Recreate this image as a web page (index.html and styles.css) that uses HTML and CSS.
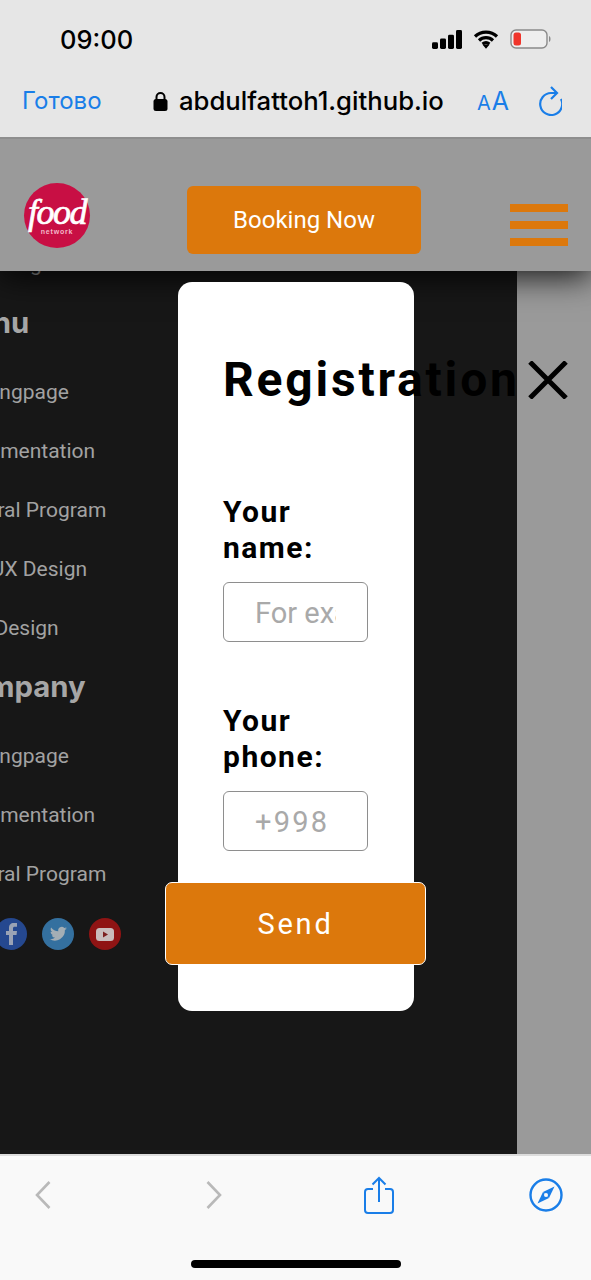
FILE: index.html
```html
<!DOCTYPE html>
<html lang="ru">
<head>
<meta charset="utf-8">
<title>Registration</title>
<link rel="stylesheet" href="styles.css">
</head>
<body>
<div class="phone">
  <div class="chrome">
    <div class="status">
      <span class="time">09:00</span>
      <div class="status-icons">
        <svg width="30" height="19" viewBox="0 0 30 20" preserveAspectRatio="none"><rect x="0" y="13" width="6" height="7" rx="1.5"/><rect x="8" y="9" width="6" height="11" rx="1.5"/><rect x="16" y="5" width="6" height="15" rx="1.5"/><rect x="24" y="0" width="6" height="20" rx="1.5"/></svg>
        <svg width="26" height="20" viewBox="0 0 26 20"><path d="M13 15.500l3.600 0-3.600 4.300-3.600-4.300z" /><path d="M2 7.500C8 1.600 18 1.600 24 7.500M6 11.500c4-3.800 10-3.800 14 0M9.600 15c2-1.700 4.800-1.700 6.800 0" fill="none" stroke="#000" stroke-width="3.200"/></svg>
        <svg class="battery" width="42" height="20" viewBox="0 0 42 20"><rect x="1" y="1" width="36" height="18" rx="5" fill="#eee" stroke="#8a8a8a" stroke-width="1.400"/><rect x="3.500" y="3.500" width="7.500" height="13" rx="2.500" fill="#f0352b"/><path d="M39 7c2 .6 2 5.400 0 6z" fill="#8a8a8a"/></svg>
      </div>
    </div>
    <div class="address">
      <span class="done">Готово</span>
      <div class="url">
        <svg width="15" height="20" viewBox="0 0 15 20"><path d="M3.500 9V6a4 4 0 0 1 8 0v3" fill="none" stroke="#000" stroke-width="2"/><rect x="0.500" y="8" width="14" height="12" rx="2.500"/></svg>
        <span>abdulfattoh1.github.io</span>
      </div>
      <span class="aa"><small>A</small>A</span>
      <svg class="reload" width="24" height="30" viewBox="0 0 24 30"><path d="M19 7H13A11 11 0 1 0 23 13" fill="none" stroke="#1a7ee8" stroke-width="2.200"/><path d="M13 1l6 6-6 6" fill="none" stroke="#1a7ee8" stroke-width="2.200"/></svg>
    </div>
  </div>

  <div class="viewport">
    <header class="site-header">
      <div class="logo"><span class="logo-food">food</span><span class="logo-net">network</span></div>
      <a class="booking">Booking Now</a>
      <div class="burger"><i></i><i></i><i></i></div>
    </header>
    <div class="site-body">
      <aside class="sidebar">
        <a class="link peek">Marketing</a>
        <h3 class="head">Menu</h3>
        <a class="link">Landingpage</a>
        <a class="link">Implementation</a>
        <a class="link">Referral Program</a>
        <a class="link">UI &amp; UX Design</a>
        <a class="link">Web Design</a>
        <h3 class="head">Company</h3>
        <a class="link">Landingpage</a>
        <a class="link">Implementation</a>
        <a class="link">Referral Program</a>
        <div class="social">
          <svg width="32" height="32" viewBox="0 0 32 32"><circle cx="16" cy="16" r="16" fill="#25488f"/><path d="M18 27V17h3.500l.5-4h-4v-2.500c0-1.200.5-1.800 1.800-1.800H22V5h-3c-3.500 0-5 2-5 5v3h-3v4h3v10z" fill="#9aa3b5"/></svg>
          <svg width="32" height="32" viewBox="0 0 32 32"><circle cx="16" cy="16" r="16" fill="#34709f"/><path d="M25 10.500c-.7.300-1.400.5-2 .6.700-.4 1.300-1.100 1.500-1.900-.7.400-1.400.7-2.200.8a3.500 3.500 0 0 0-6 3.200c-2.900-.1-5.500-1.500-7.200-3.700-.9 1.600-.4 3.600 1.100 4.600-.6 0-1.100-.2-1.600-.4 0 1.700 1.200 3.100 2.800 3.500-.5.100-1 .1-1.600 0 .4 1.400 1.700 2.400 3.300 2.400A7 7 0 0 1 7.500 21a10 10 0 0 0 15.400-8.900c.8-.4 1.500-1 2.100-1.600z" fill="#a3aeb5"/></svg>
          <svg width="32" height="32" viewBox="0 0 32 32"><circle cx="16" cy="16" r="16" fill="#8f1414"/><rect x="7" y="10" width="18" height="13" rx="3.500" fill="#c9bdbd"/><path d="M14 13.500l5 3-5 3z" fill="#7c1f1f"/></svg>
        </div>
      </aside>
    </div>

    <form class="modal">
      <div class="modal-top">
        <h2 class="modal-title">Registration</h2>
        <svg class="close" width="40" height="38" viewBox="0 0 40 38"><path d="M2 1l36 36M38 1L2 37" fill="none" stroke="#000" stroke-width="5"/></svg>
      </div>
      <label class="field-label first">Your name:</label>
      <input class="field" type="text" placeholder="For example">
      <label class="field-label second">Your phone:</label>
      <input class="field field-phone" type="text" placeholder="+998">
      <button class="send" type="button">Send</button>
    </form>
  </div>

  <div class="toolbar">
    <div class="tools">
      <svg width="18" height="30" viewBox="0 0 18 30"><path d="M15.500 2L3 15l12.500 13" fill="none" stroke="#b9b9b9" stroke-width="2.600"/></svg>
      <svg class="forward" width="18" height="30" viewBox="0 0 18 30"><path d="M2.500 2L15 15 2.500 28" fill="none" stroke="#b9b9b9" stroke-width="2.600"/></svg>
      <svg width="30" height="38" viewBox="0 0 30 38"><path d="M9 13H4a3 3 0 0 0-3 3v18a3 3 0 0 0 3 3h22a3 3 0 0 0 3-3V16a3 3 0 0 0-3-3h-5" fill="none" stroke="#1a7ee8" stroke-width="2"/><path d="M15 26V2M8.500 8.500L15 2l6.500 6.500" fill="none" stroke="#1a7ee8" stroke-width="2"/></svg>
      <svg width="34" height="34" viewBox="0 0 34 34"><circle cx="17" cy="17" r="15.500" fill="none" stroke="#1a7ee8" stroke-width="2.400"/><path d="M25.500 8.500L14 14l6 6z" fill="#1a7ee8"/><path d="M8.500 25.500L14 14l6 6z" fill="#1a7ee8"/><circle cx="17" cy="17" r="2" fill="#f9f9f9"/></svg>
    </div>
    <div class="home-bar"></div>
  </div>
</div>
</body>
</html>
```
FILE: styles.css
```css
* { box-sizing: border-box; }
html, body { margin: 0; padding: 0; }
body { font-family: Roboto, "Liberation Sans", sans-serif; background: #fff; }
.phone { width: 591px; height: 1280px; display: flex; flex-direction: column; overflow: hidden; }

.chrome { height: 139px; background: #e6e6e6; border-bottom: 2px solid #8e8e8e; padding: 0 29px 0 22px; flex: none; }
.status { height: 78px; display: flex; justify-content: space-between; align-items: center; padding: 0 0 0 38px; }
.time { font-family: Inter, sans-serif; font-weight: 500; font-size: 25.500px; color: #000; }
.status-icons { display: flex; align-items: center; gap: 11px; margin-right: 10px; }
.address { height: 45px; display: flex; align-items: center; }
.done { font-family: Inter, Roboto, sans-serif; font-size: 24px; color: #1a7ee8; width: 131px; }
.url { display: flex; align-items: center; gap: 11px; font-family: Inter, sans-serif; font-weight: 500; font-size: 25.700px; color: #000; width: 324px; }
.aa { font-family: Inter, sans-serif; font-size: 25px; color: #1a7ee8; width: 61px; white-space: nowrap; }
.aa small { font-size: 20px; margin-right: 1px; }

.viewport { position: relative; flex: 1; min-height: 0; background: #9a9a9a; overflow: hidden; }
.site-header { position: relative; z-index: 2; height: 132px; background: #9a9a9a; display: flex; align-items: center; justify-content: space-between; padding: 0 23px 0 24px; box-shadow: 0 6px 30px rgba(0, 0, 0, 0.85); }
.logo { width: 66px; height: 65px; margin-top: 21px; border-radius: 50%; background: #c80f44; color: #fff; display: flex; flex-direction: column; align-items: center; justify-content: center; }
.logo-food { font-family: "Liberation Serif", serif; font-style: italic; font-size: 36px; line-height: 32px; letter-spacing: -1.500px; -webkit-text-stroke: 0.700px #fff; }
.logo-net { font-family: "Liberation Sans", sans-serif; font-weight: 700; font-size: 7px; line-height: 8px; letter-spacing: 0.800px; color: #f3b8c8; }
.booking { width: 234px; height: 68px; margin: 29px 0 0 8px; border-radius: 6px; background: #dc780c; color: #fff; font-size: 24px; display: flex; align-items: center; justify-content: center; }
.burger { width: 58px; margin-top: 40px; display: flex; flex-direction: column; gap: 9px; }
.burger i { display: block; height: 8px; background: #dc780c; }

.site-body { height: 883px; }
.sidebar { width: 517px; height: 883px; background: #171717; overflow: hidden; display: flex; flex-direction: column; align-items: flex-start; }
.link { display: block; margin-left: -52px; height: 59px; line-height: 59px; font-size: 21px; color: #a2a2a2; white-space: nowrap; flex: none; }
.peek { margin-top: -36px; height: 59px; }
.head { margin: 0 0 0 -52px; height: 69px; font-family: Inter, sans-serif; font-weight: 700; font-size: 29.300px; line-height: 58px; color: #a6a6a6; flex: none; white-space: nowrap; }
.social { display: flex; gap: 15px; margin-left: -5px; margin-top: 14px; }

.modal { position: absolute; left: 178px; top: 143px; width: 236px; height: 729px; background: #fff; border-radius: 14px; padding: 73px 45px 0; z-index: 3; }
.modal-top { display: flex; align-items: center; gap: 8px; width: max-content; }
.modal-title { margin: 0; font-family: Roboto, sans-serif; font-weight: 700; font-size: 48px; letter-spacing: 2.800px; line-height: 50px; color: #000; }
.close { flex: none; }
.field-label { display: block; width: 115px; font-weight: 700; font-size: 30px; letter-spacing: 1.500px; line-height: 36px; color: #000; }
.first { margin-top: 89px; }
.second { margin-top: 61px; }
.field { display: block; width: 145px; height: 60px; margin-top: 16px; padding: 2px 31px 0; border: 1px solid #8e8e8e; border-radius: 6px; background: #fff; font-family: Roboto, sans-serif; font-size: 29px; color: #000; }
.field::placeholder { color: #a9a9a9; opacity: 1; }
.field-phone::placeholder { letter-spacing: 2.200px; }
.send { display: block; width: 261px; height: 83px; margin: 31px 0 0 -58px; background: #dc780c; border: 1px solid #fff; border-radius: 7px; color: #fff; font-family: Roboto, sans-serif; font-size: 29px; letter-spacing: 2.800px; }

.toolbar { height: 126px; flex: none; background: #f9f9f9; border-top: 2px solid #dcdcdc; }
.tools { height: 78px; display: grid; grid-template-columns: 171px 159px 165px auto; align-items: center; padding: 0 0 0 34px; }
.home-bar { width: 210px; height: 8px; margin: 26px auto 0; border-radius: 4px; background: #000; }
```
